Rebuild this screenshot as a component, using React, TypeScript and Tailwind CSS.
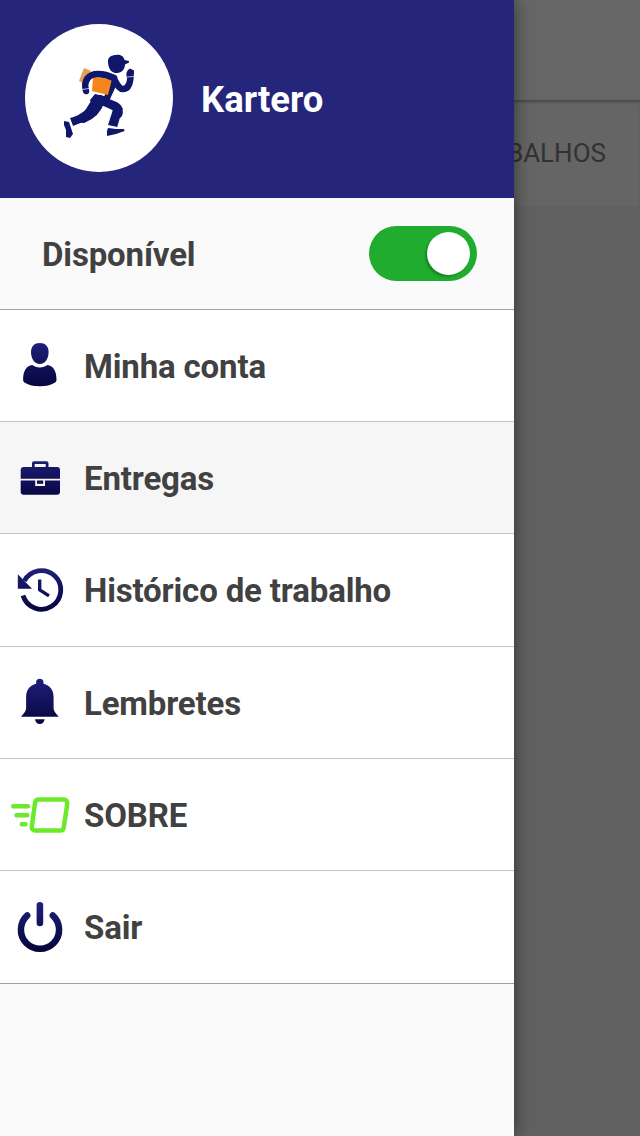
import { ReactNode, useState } from "react";
import { clsx } from "clsx";

// Every icon is drawn on an 84x112 canvas, the size of the row's left cell
function IconCell({ children }: { children: ReactNode }) {
  return (
    <svg viewBox="0 0 84 112" className="h-[112px] w-[84px] shrink-0">
      <defs>
        <linearGradient
          id="navy"
          gradientUnits="userSpaceOnUse"
          x1="0"
          y1="32"
          x2="0"
          y2="80"
        >
          <stop offset="0" stopColor="#20207c" />
          <stop offset="1" stopColor="#04043c" />
        </linearGradient>
      </defs>
      {children}
    </svg>
  );
}

function UserIcon() {
  return (
    <IconCell>
      <g fill="url(#navy)">
        <path d="M39.8 34c5.4 0 8.8 3.4 8.8 9 0 6.6-3.5 12-8.8 12s-8.800-5.400-8.800-12c0-5.600 3.400-9 8.800-9z" />
        <path d="M32.300 56c2 1.600 4.500 2.500 7.500 2.500s5.500-.9 7.500-2.500c5.700.7 9.200 5.400 9.200 14.800 0 1.400-.6 2.400-1.800 3-3.700 2.400-8.700 3.500-14.900 3.500s-11.200-1.100-14.900-3.500c-1.200-.6-1.800-1.600-1.800-3 0-9.400 3.500-14.100 9.200-14.800z" />
      </g>
    </IconCell>
  );
}

function BriefcaseIcon() {
  return (
    <IconCell>
      <g fill="url(#navy)">
        <path d="M32 45v-3.700a2 2 0 0 1 2-2h12.500a2 2 0 0 1 2 2V45h8.500a3 3 0 0 1 3 3v8.700H20.700V48a3 3 0 0 1 3-3zm2.700 0h11v-3h-11z" />
        <path d="M20.700 58.500h14.500V64h9.800v-5.500h15v11.300a3 3 0 0 1-3 3H23.700a3 3 0 0 1-3-3z" />
        <path d="M37 58.500h6.200v3.300H37z" />
      </g>
    </IconCell>
  );
}

function HistoryIcon() {
  return (
    <IconCell>
      <path
        d="M24.400 46.900A19.300 19.300 0 1 1 23 61.500"
        fill="none"
        stroke="url(#navy)"
        strokeWidth="4.800"
      />
      <path d="M17.800 40.200L32 54.700H17.800z" fill="url(#navy)" />
      <path
        d="M39.700 45.500v10.400l9.300 6"
        fill="none"
        stroke="url(#navy)"
        strokeWidth="3.400"
      />
    </IconCell>
  );
}

function BellIcon() {
  return (
    <IconCell>
      <g fill="url(#navy)">
        <path d="M39.800 32.700c2.300 0 3.700 1.400 3.700 3.600v1.500c6.300 1.500 10.100 6 10.100 13.200v11.200c0 2.300 1.600 4.500 5.100 8.600H21c3.500-4.100 5.100-6.300 5.100-8.600V51c0-7.200 3.800-11.700 10-13.200v-1.500c0-2.200 1.400-3.600 3.700-3.600z" />
        <path d="M35 73.200h9.600c-.4 3-2.200 4.700-4.800 4.700s-4.400-1.700-4.800-4.700z" />
      </g>
    </IconCell>
  );
}

function ParcelIcon() {
  return (
    <IconCell>
      <g
        fill="none"
        stroke="#6bea2b"
        strokeWidth="4.500"
        strokeLinecap="round"
        strokeLinejoin="round"
      >
        <path d="M38.800 40.400h25a3.600 3.600 0 0 1 3.500 4.200l-3.600 24a3.600 3.600 0 0 1-3.500 3H35.200a3.400 3.400 0 0 1-3.400-4l3.300-24.100a3.800 3.800 0 0 1 3.700-3.100z" />
        <path d="M13.200 47.200h14.700M16.500 56.200h10.800M21.800 65.200h3.600" />
      </g>
    </IconCell>
  );
}

function PowerIcon() {
  return (
    <IconCell>
      <path
        d="M27.200 44.500a19.100 19.100 0 1 0 25.600 0"
        fill="none"
        stroke="url(#navy)"
        strokeWidth="6.500"
        strokeLinecap="round"
      />
      <rect
        x="36.600"
        y="31"
        width="6.600"
        height="24.200"
        rx="3.300"
        fill="url(#navy)"
      />
    </IconCell>
  );
}

// Running courier with a parcel under the arm
function CourierLogo() {
  return (
    <svg viewBox="25 24 148 148" className="size-full">
      <path d="M84 68l7 3-4 14-8-4z" fill="#dfa05a" />
      <g
        fill="none"
        stroke="#10176a"
        strokeLinecap="round"
        strokeLinejoin="round"
      >
        <path d="M113 79l-1 8-5 11" strokeWidth="6.500" />
        <path d="M114 79c3 5 5 10 9 10 5 0 7-5 7.500-12" strokeWidth="6.500" />
        <path d="M100 100c-3 9-9 15-17 18" strokeWidth="10" />
        <path d="M103 101l9 4c6 2 7 5 6 9" strokeWidth="9" />
      </g>
      <path d="M93 77l19 2-4 16-16-4z" fill="#f5861c" />
      <path
        d="M86 91c-3-11 3-17 12-17 7 0 12 2 16 4"
        fill="none"
        stroke="#10176a"
        strokeWidth="6.500"
        strokeLinecap="round"
      />
      <g fill="#10176a">
        {/* head and cap */}
        <path d="M108 61c0-4 4-6 8-6 5-1 8 2 8.500 5l4.500 1v1.500l-4 2c-.3 6-4 8.500-9 8.500-5 0-8-5-8-12z" />
        <path d="M127 78c-1-3-1-6 1-8l2-1.500 4 2v3l-1 5z" />
        {/* hips, legs and shoes */}
        <path d="M95 94l13 3 1 7-16 4-3-8z" />
        <path d="M91 101l8 9c-4 6-9 9-16 12l-10 4-3-8c8-2 13-5 16-9z" />
        <path d="M113.500 108h9.200l-5.500 19-9.200-2z" />
        <path d="M64 121l5 1 4 12-3 4-4-1v-7l-2-5z" />
        <path d="M108 128l8 1 8 0 .5 2-8.500 3-9 2v-5z" />
      </g>
      <path
        d="M69.500 119l3.500 9M107 126l11 2M82 89.500l7-1M127 77l7-.5"
        stroke="#fff"
        strokeWidth="0.700"
      />
    </svg>
  );
}

const menuItems = [
  { label: "Minha conta", icon: <UserIcon /> },
  { label: "Entregas", icon: <BriefcaseIcon />, active: true },
  { label: "Histórico de trabalho", icon: <HistoryIcon /> },
  { label: "Lembretes", icon: <BellIcon /> },
  { label: "SOBRE", icon: <ParcelIcon /> },
  { label: "Sair", icon: <PowerIcon /> },
];

function Switch() {
  const [available, setAvailable] = useState(true);

  return (
    <button
      role="switch"
      aria-checked={available}
      aria-label="Disponível"
      onClick={() => setAvailable(!available)}
      className={clsx(
        "flex h-[54.500px] w-[107.500px] items-center rounded-full px-[6.500px]",
        available ? "justify-end bg-[#20ac2e]" : "justify-start bg-gray-400",
      )}
    >
      <span className="size-[43px] rounded-full bg-white shadow-[-2px_2px_2px_rgba(0,0,0,0.22)]" />
    </button>
  );
}

function Drawer() {
  return (
    <aside className="absolute inset-y-0 left-0 flex w-[513.700px] flex-col bg-[#fafafa] shadow-[0_0_16px_rgba(0,0,0,0.5)]">
      <header className="flex h-[198.400px] shrink-0 items-start gap-[28px] bg-[#25257b] pt-[24px] pl-[25px]">
        <div className="size-[148px] overflow-hidden rounded-full bg-white">
          <CourierLogo />
        </div>
        <h1 className="mt-[54px] text-[36.500px] leading-[44px] font-bold tracking-normal text-white">
          Kartero
        </h1>
      </header>

      <div className="flex h-[111.400px] shrink-0 items-center justify-between border-b border-[#a0a0a0] pr-[37px] pl-[42px]">
        <span className="pt-[2px]">Disponível</span>
        <Switch />
      </div>

      <nav>
        {menuItems.map((item, index) => (
          <a
            key={item.label}
            className={clsx(
              "flex h-[112.300px] items-center border-b",
              item.active ? "bg-[#f6f6f6]" : "bg-white",
              index === menuItems.length - 1
                ? "border-[#a0a0a0]"
                : "border-[#c4c4c4]",
            )}
          >
            {item.icon}
            <span className="pt-[2px]">{item.label}</span>
          </a>
        ))}
      </nav>
    </aside>
  );
}

export default function App() {
  return (
    <div className="relative h-[1136px] w-[640px] overflow-hidden bg-[#616161] font-['Roboto',sans-serif] text-[33px] font-bold tracking-[-0.150px] text-[#414141]">
      {/* Dimmed screen behind the drawer */}
      <div className="h-[100px] bg-[#666666] shadow-[0_1px_4px_rgba(0,0,0,0.5)]" />
      <div className="flex h-[106px] items-center justify-end bg-[#656565] pt-px pr-[34px] text-[26px] font-normal tracking-normal text-[#323232] shadow-[inset_0_3px_3px_-1px_rgba(0,0,0,0.3)]">
        TRABALHOS
      </div>
      <Drawer />
    </div>
  );
}
